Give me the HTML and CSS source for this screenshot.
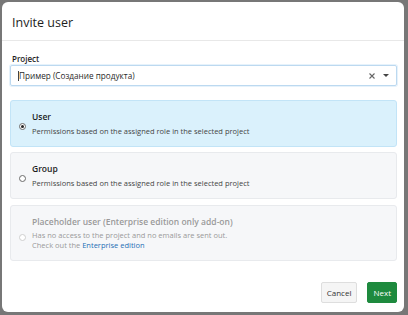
FILE: index.html
```html
<!DOCTYPE html>
<html lang="en">
<head>
    <meta charset="UTF-8">
    <title>Invite user</title>
    <link rel="stylesheet" href="styles.css">
</head>
<body>
    <div class="modal">
        <div class="modal-header">
            <h1>Invite user</h1>
        </div>

        <div class="modal-body">
            <label class="field-label">Project</label>
            <div class="select">
                <span class="select-value">Пример (Создание продукта)</span>
                <svg class="select-clear" width="6" height="6" viewBox="0 0 6 6">
                    <path d="M0.5 0.5 L5.5 5.5 M5.5 0.5 L0.5 5.5" stroke="#666" stroke-width="1.1" fill="none"/>
                </svg>
                <span class="select-arrow"></span>
            </div>

            <div class="option selected">
                <span class="radio checked"></span>
                <div class="option-text">
                    <div class="option-title">User</div>
                    <div class="option-desc">Permissions based on the assigned role in the selected project</div>
                </div>
            </div>

            <div class="option">
                <span class="radio"></span>
                <div class="option-text">
                    <div class="option-title">Group</div>
                    <div class="option-desc">Permissions based on the assigned role in the selected project</div>
                </div>
            </div>

            <div class="option disabled">
                <span class="radio"></span>
                <div class="option-text">
                    <div class="option-title">Placeholder user (Enterprise edition only add-on)</div>
                    <div class="option-desc">Has no access to the project and no emails are sent out.<br>Check out the <a href="#">Enterprise edition</a></div>
                </div>
            </div>
        </div>

        <div class="modal-footer">
            <button class="btn">Cancel</button>
            <button class="btn btn-primary">Next</button>
        </div>
    </div>
</body>
</html>
```

FILE: styles.css
```css
* {
    margin: 0;
    padding: 0;
    box-sizing: border-box;
}

body {
    font-family: 'Open Sans', 'Noto Sans', sans-serif;
    background: #777;
    color: #333;
    width: 408px;
    height: 315px;
    padding: 2px 4px 3px 2px;
}

.modal {
    background: #fff;
    border-radius: 6px;
    height: 100%;
    display: flex;
    flex-direction: column;
}

.modal-header {
    height: 39px;
    border-bottom: 1px solid #e8e8e8;
    display: flex;
    align-items: center;
    padding: 3px 10px 0;
}

.modal-header h1 {
    font-size: 12.5px;
    font-weight: 400;
    color: #1e1e1e;
}

.modal-body {
    padding: 12px 7px 0 8px;
    flex: 1;
}

.field-label {
    display: block;
    font-size: 8px;
    line-height: 11px;
    font-weight: 600;
    color: #1e1e1e;
    margin-bottom: 1px;
    padding-left: 2px;
}

.select {
    height: 21px;
    border: 1px solid #bcd9f0;
    box-shadow: 0 0 0 1px #e6f2fb;
    border-radius: 2px;
    display: flex;
    align-items: center;
    padding: 0 7px;
    margin-bottom: 14px;
}

.select-value {
    flex: 1;
    font-size: 8.2px;
    color: #2a2a2a;
    border-left: 1px solid #444;
    line-height: 10px;
}

.select-clear {
    margin-right: 8px;
}

.select-arrow {
    width: 0;
    height: 0;
    border-left: 3px solid transparent;
    border-right: 3px solid transparent;
    border-top: 3px solid #444;
}

.option {
    display: flex;
    align-items: center;
    border: 1px solid #e8eaed;
    background: #f6f7f9;
    border-radius: 3px;
    padding: 10px 8px 10px 8px;
    margin-bottom: 5px;
}

.option.selected {
    background: #daf1fc;
    border-color: #c2e4f7;
}

.option.disabled {
    margin-top: 6px;
}

.radio {
    width: 7px;
    height: 7px;
    border: 1px solid #6b6b6b;
    border-radius: 50%;
    background: #fff;
    margin-right: 6px;
    margin-top: 5px;
    flex-shrink: 0;
    display: flex;
    align-items: center;
    justify-content: center;
}

.radio.checked::after {
    content: "";
    width: 3px;
    height: 3px;
    border-radius: 50%;
    background: #222;
}

.disabled .radio {
    border-color: #cfcfcf;
    margin-top: 9px;
}

.option-title {
    font-size: 8.5px;
    line-height: 11px;
    font-weight: 600;
    color: #1e1e1e;
    margin-bottom: 4px;
}

.option-desc {
    font-size: 7.5px;
    color: #444;
    line-height: 10px;
}

.disabled .option-title {
    color: #9a9a9a;
    margin-bottom: 3px;
}

.disabled .option-desc {
    color: #9a9a9a;
}

.option-desc a {
    color: #1f6fb5;
    text-decoration: none;
}

.modal-footer {
    display: flex;
    justify-content: flex-end;
    gap: 10px;
    padding: 0 7px 9px 0;
}

.btn {
    font-family: inherit;
    font-size: 8px;
    height: 21px;
    padding: 0 5px;
    border: 1px solid #dedede;
    background: #f5f5f5;
    color: #333;
    border-radius: 2px;
}

.btn-primary {
    background: #1e8a3e;
    border-color: #1e8a3e;
    color: #fff;
}
```
